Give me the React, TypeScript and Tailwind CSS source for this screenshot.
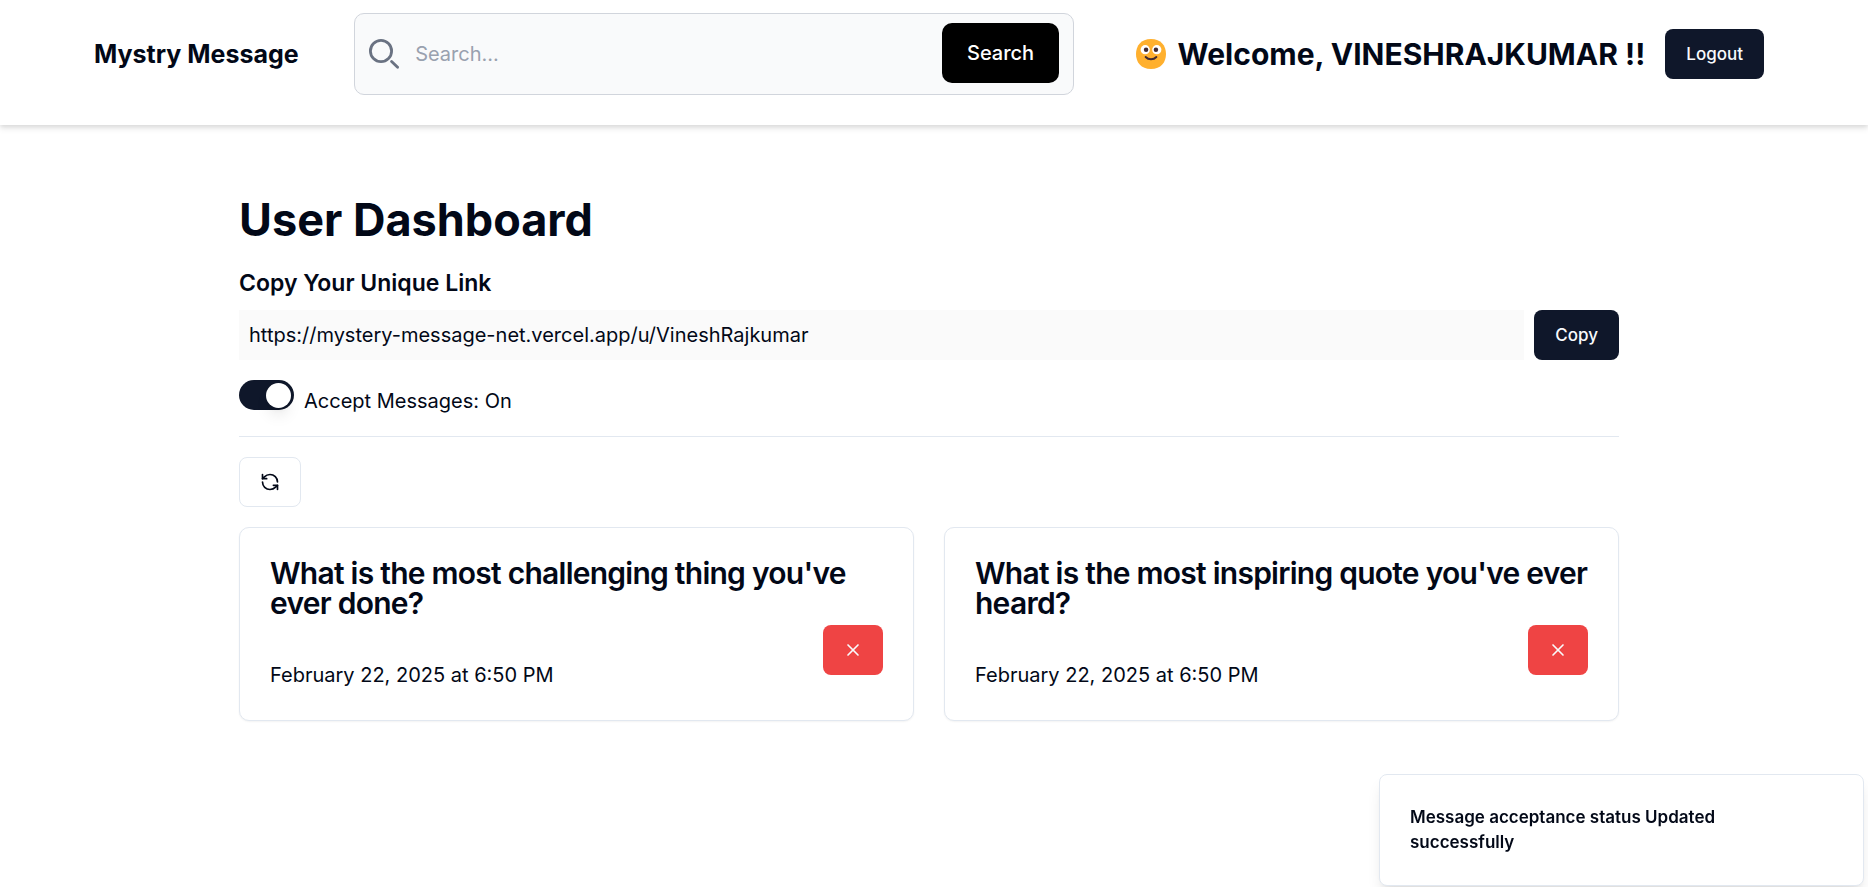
import { useState } from "react";
import { RefreshCcw, X } from "lucide-react";

const messages = [
  { id: 1, content: "What is the most challenging thing you've ever done?", date: "February 22, 2025 at 6:50 PM" },
  { id: 2, content: "What is the most inspiring quote you've ever heard?", date: "February 22, 2025 at 6:50 PM" },
];

function SearchIcon() {
  return (
    <svg viewBox="0 0 30 30" className="size-[30px] shrink-0 text-gray-500" fill="none" stroke="currentColor" strokeLinecap="round" aria-hidden="true">
      <circle cx="12" cy="12" r="10.6" strokeWidth="2.8" />
      <path d="M22.6 22.4 28.6 28.2" strokeWidth="2.8" />
    </svg>
  );
}

function SmileIcon() {
  return (
    <svg viewBox="2 2 28 28" className="size-[30px] shrink-0" aria-hidden="true">
      <path fill="#FFB02E" d="M15.999 29.998c9.334 0 13.999-6.268 13.999-14C29.998 8.268 25.333 2 15.999 2 6.665 2 2 8.268 2 15.999c0 7.731 4.664 13.999 13.999 13.999Z" />
      <circle cx="10.6" cy="12" r="4.3" fill="#fff" />
      <circle cx="21.4" cy="12" r="4.3" fill="#fff" />
      <circle cx="11.4" cy="12" r="2.1" fill="#402A32" />
      <circle cx="20.6" cy="12" r="2.1" fill="#402A32" />
      <path d="M11 18.8c2.6 2.8 7.400 2.800 10 0" fill="none" stroke="#402A32" strokeWidth="1.800" strokeLinecap="round" />
    </svg>
  );
}

function Navbar() {
  return (
    <nav className="bg-white pt-[13px] pr-[104px] pb-[30px] pl-[94px] shadow-[0_4px_6px_rgb(0_0_0/0.08),0_2px_4px_rgb(0_0_0/0.08)]">
      <div className="flex items-center justify-between">
        <a href="#" className="text-[25px] leading-[35px] font-bold">Mystry Message</a>
        <form className="flex h-[82px] w-[720px] items-center rounded-[10px] border border-gray-300 bg-gray-50 px-3.5" onSubmit={(e) => e.preventDefault()}>
          <SearchIcon />
          <input
            type="search"
            aria-label="Search"
            placeholder="Search..."
            className="ml-4 h-[60px] min-w-0 flex-1 bg-transparent text-[20px] leading-[30px] outline-none placeholder:text-gray-400"
          />
          <button type="submit" className="mb-0.5 h-[60px] rounded-[10px] bg-black px-[25px] text-[20px] leading-[30px] font-medium text-white">
            Search
          </button>
        </form>
        <div className="flex items-center gap-5 pl-1.5">
          <span className="flex items-center gap-3 text-[30px] leading-10 font-bold">
            <SmileIcon />
            Welcome, VINESHRAJKUMAR !!
          </span>
          <button type="button" className="h-[50px] rounded-[8px] bg-[#0f172a] px-[21px] text-[17px] leading-[25px] font-medium text-slate-50">
            Logout
          </button>
        </div>
      </div>
    </nav>
  );
}

function MessageCard({ content, date }: { content: string; date: string }) {
  return (
    <article className="rounded-[10px] border border-slate-200 bg-white p-[30px] shadow-xs">
      <h3 className="text-[30px] leading-[30px] font-semibold tracking-tight">{content}</h3>
      <div className="mt-[7px] flex h-[65px] justify-between">
        <p className="self-end text-[20px] leading-[30px]">{date}</p>
        <button type="button" aria-label="Delete message" className="flex h-[50px] w-[60px] items-center justify-center rounded-[8px] bg-[#ef4444] text-slate-50">
          <X size={20} strokeWidth={2} />
        </button>
      </div>
    </article>
  );
}

export default function App() {
  const [accept, setAccept] = useState(true);

  return (
    <div className="min-h-screen overflow-x-hidden bg-white font-['Inter',sans-serif] text-[#020817]">
      <Navbar />
      <div className="pr-[10px]">
        <main className="mx-auto my-10 max-w-[1440px] p-[30px]">
          <h1 className="mb-5 text-[45px] leading-[50px] font-bold">User Dashboard</h1>

          <section className="mb-5">
            <h2 className="mb-2 text-[23px] leading-[37px] font-semibold">
              <label htmlFor="profile-link">Copy Your Unique Link</label>
            </h2>
            <div className="flex items-center gap-2.5">
              <input
                id="profile-link"
                type="text"
                readOnly
                value="https://mystery-message-net.vercel.app/u/VineshRajkumar"
                className="h-[50px] min-w-0 flex-1 bg-[#fafafa] px-2.5 text-[20px] leading-[30px] outline-none"
              />
              <button type="button" className="h-[50px] rounded-[8px] bg-[#0f172a] px-[21px] text-[17px] leading-[25px] font-medium text-slate-50">
                Copy
              </button>
            </div>
          </section>

          <div className="flex h-9 items-start gap-2.5">
            <button
              id="accept-messages"
              type="button"
              role="switch"
              aria-checked={accept}
              onClick={() => setAccept(!accept)}
              className={`flex h-[30px] w-[55px] items-center rounded-full px-[3px] ${accept ? "justify-end bg-[#0f172a]" : "justify-start bg-slate-200"}`}
            >
              <span className="size-[25px] rounded-full bg-white shadow-lg" />
            </button>
            <label htmlFor="accept-messages" className="self-end text-[20px] leading-[30px]">
              Accept Messages: {accept ? "On" : "Off"}
            </label>
          </div>

          <div role="separator" className="my-5 h-px bg-slate-200" />

          <button type="button" aria-label="Refresh messages" className="flex h-[50px] w-[62px] items-center justify-center rounded-[8px] border border-slate-200 bg-white">
            <RefreshCcw size={20} />
          </button>

          <div className="mt-5 grid grid-cols-1 gap-[30px] md:grid-cols-2">
            {messages.map((m) => (
              <MessageCard key={m.id} content={m.content} date={m.date} />
            ))}
          </div>
        </main>
      </div>

      <div role="status" className="fixed right-1 bottom-px w-[485px] rounded-[8px] border border-slate-200 bg-white py-[30px] pr-10 pl-[30px] shadow-lg">
        <p className="max-w-[400px] text-[17px] leading-[25px] font-semibold">Message acceptance status Updated successfully</p>
      </div>
    </div>
  );
}
